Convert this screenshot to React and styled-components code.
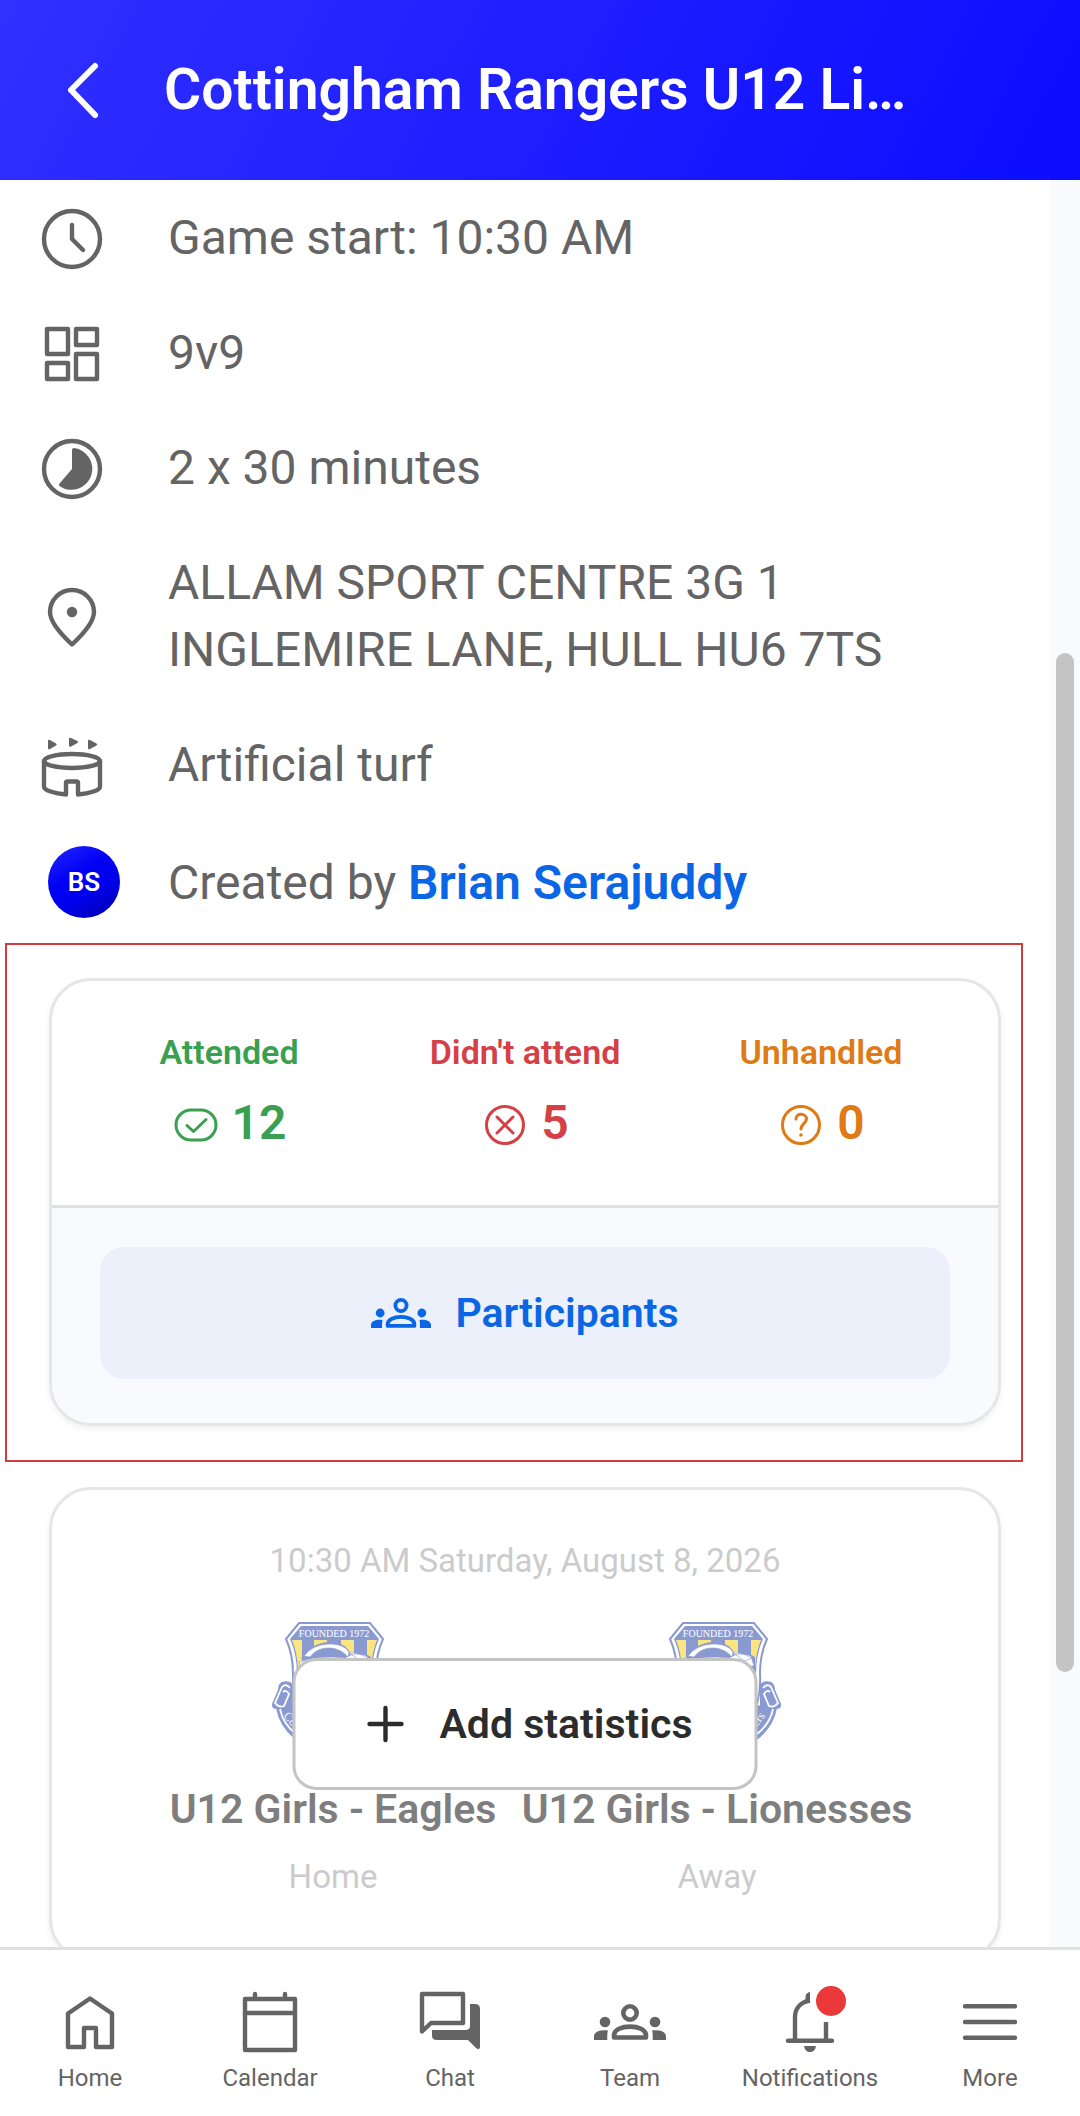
import React from "react";
import styled, { createGlobalStyle } from "styled-components";

const GlobalStyle = createGlobalStyle`
  *, *::before, *::after { box-sizing: border-box; }
  body {
    margin: 0;
    background: #fff;
    color: #646464;
    font-family: Roboto, "Liberation Sans", sans-serif;
  }
  button { font-family: inherit; cursor: pointer; }
`;

const Page = styled.div`
  display: flex;
  flex-direction: column;
  height: 100vh;
`;

const Header = styled.header`
  display: flex;
  align-items: center;
  flex: none;
  gap: 44px;
  height: 180px;
  padding: 0 160px 0 48px;
  color: #fff;
  background: linear-gradient(118deg, #3030ff 0%, #1e1eff 50%, #0c0cff 100%);
`;

const BackButton = styled.button`
  flex: none;
  width: 72px;
  height: 72px;
  padding: 0;
  border: 0;
  color: inherit;
  background: none;
`;

const Title = styled.h1`
  margin: 0;
  min-width: 0;
  overflow: hidden;
  white-space: nowrap;
  text-overflow: ellipsis;
  font-size: 57px;
  line-height: 72px;
  font-weight: 600;
`;

const Body = styled.div`
  display: flex;
  flex: 1;
  min-height: 0;
`;

const Content = styled.main`
  flex: 1;
  min-width: 0;
  overflow: hidden;
`;

const ScrollTrack = styled.div`
  display: flex;
  flex-direction: column;
  align-items: center;
  flex: none;
  width: 30px;
  background: #f8fafc;
`;

const TrackSpace = styled.div`
  flex: ${(p) => p.$share};
`;

const Thumb = styled.div`
  flex: 1019;
  width: 18px;
  border-radius: 9px;
  background: #c4c4c4;
`;

const Details = styled.ul`
  display: flex;
  flex-direction: column;
  gap: 48px;
  margin: 0;
  padding: 24px 48px 25px 36px;
  list-style: none;
`;

const DetailRow = styled.li`
  display: flex;
  align-items: center;
  font-size: 48px;
  line-height: 67px;
`;

const Media = styled.span`
  flex: none;
  width: 132px;
  height: 72px;
  margin: ${(p) => (p.$avatar ? "0" : "-2px 0 -4px")};
  padding-left: ${(p) => (p.$avatar ? "12px" : "0")};
`;

const Avatar = styled.span`
  display: flex;
  align-items: center;
  justify-content: center;
  width: 72px;
  height: 72px;
  border-radius: 50%;
  color: #fff;
  font-size: 26px;
  font-weight: 600;
  background: linear-gradient(150deg, #2626ff 0%, #0000f4 40%, #0000f0 60%, #0000a8 100%);
`;

const PersonLink = styled.a`
  color: #0a66e4;
  font-weight: 600;
  text-decoration: none;
`;

const Highlight = styled.section`
  margin: 0 27px 25px 5px;
  padding: 33px 20px 34px 42px;
  border: 2px solid #d23c3c;
`;

const Card = styled.div`
  overflow: hidden;
  border: 3px solid #e6e6e6;
  border-radius: 42px;
  background: #fff;
  box-shadow: 0 3px 6px rgba(0, 0, 0, 0.06);
`;

const Stats = styled.div`
  display: grid;
  grid-template-columns: repeat(3, 1fr);
  padding: 46px 29px 49px;
`;

const Stat = styled.div`
  display: flex;
  flex-direction: column;
  align-items: center;
  gap: 12px;
  color: ${(p) => p.$color};
`;

const StatLabel = styled.span`
  font-size: 34px;
  line-height: 50px;
  font-weight: 600;
  white-space: nowrap;
`;

const StatValue = styled.span`
  display: flex;
  align-items: center;
  gap: 12px;
  font-size: 48px;
  line-height: 67px;
  font-weight: 600;

  svg { margin-top: 4px; }
`;

const CardFooter = styled.div`
  padding: 39px 48px 44px;
  border-top: 3px solid #e0e0e0;
  background: #f9fafd;
`;

const ActionButton = styled.button`
  display: flex;
  align-items: center;
  justify-content: center;
  gap: 24px;
  height: 132px;
  border-radius: 24px;
  font-size: 41px;
  font-weight: 600;
  white-space: nowrap;
`;

const ParticipantsButton = styled(ActionButton)`
  width: 100%;
  border: 0;
  color: #0a66e4;
  background: #ebf0fb;
`;

const MatchCard = styled(Card)`
  position: relative;
  margin: 0 49px;
`;

const MatchInfo = styled.div`
  display: flex;
  flex-direction: column;
  align-items: center;
  gap: 37px;
  padding: 47px 0 57px;
  opacity: 0.6;
`;

const Caption = styled.span`
  color: #aaa;
  font-size: 33px;
  line-height: 48px;
`;

const Teams = styled.div`
  display: grid;
  grid-template-columns: repeat(2, 384px);
  justify-content: center;
`;

const Team = styled.div`
  display: flex;
  flex-direction: column;
  align-items: center;
`;

const TeamName = styled.span`
  margin: 13px -12px 14px;
  color: #2a2a2a;
  font-size: 41px;
  line-height: 60px;
  font-weight: 600;
  white-space: nowrap;
`;

const AddButton = styled(ActionButton)`
  position: absolute;
  top: 50%;
  left: 50%;
  transform: translate(-50%, -50%);
  padding: 0 62px 0 60px;
  border: 3px solid #c4c4c4;
  color: #2c2c2c;
  background: #fff;
`;

const Nav = styled.nav`
  display: grid;
  grid-template-columns: repeat(6, 1fr);
  flex: none;
  padding: 36px 0 20px;
  border-top: 3px solid #e0e0e0;
  background: #fff;
`;

const NavLink = styled.a`
  display: flex;
  flex-direction: column;
  align-items: center;
  gap: 2px;
  color: #646464;
  font-size: 24px;
  line-height: 36px;
  text-decoration: none;
`;

const NavIcon = styled.span`
  position: relative;
  width: 72px;
  height: 72px;
`;

const Badge = styled.span`
  position: absolute;
  top: 0;
  right: 0;
  width: 30px;
  height: 30px;
  border-radius: 50%;
  background: #eb3838;
`;

const Svg = styled.svg`
  display: block;
  flex: none;
  fill: none;
  stroke: currentColor;
  stroke-width: ${(p) => p.$weight || 4.4};
  stroke-linecap: round;
  stroke-linejoin: round;

  .solid { fill: currentColor; stroke: none; }
`;

const Icon = ({ size = 72, box = 72, weight, children }) => (
  <Svg width={size} height={size} viewBox={`0 0 ${box} ${box}`} $weight={weight} aria-hidden="true">
    {children}
  </Svg>
);

const ClockIcon = () => (
  <Icon><circle cx="36" cy="36" r="28" /><path d="M36 22V36L47 47" /></Icon>
);

const GridIcon = () => (
  <Icon>
    <rect x="11" y="11" width="21" height="25" /><rect x="40" y="11" width="21" height="16" />
    <rect x="11" y="45" width="21" height="16" /><rect x="40" y="36" width="21" height="25" />
  </Icon>
);

const DurationIcon = () => (
  <Icon>
    <circle cx="36" cy="36" r="28" />
    <path className="solid" d="M36 17Q36 15 38 15A21 21 0 1 1 24 53.500Q22 52 23.500 50.500L36 36Z" />
  </Icon>
);

const PinIcon = () => (
  <Icon>
    <path d="M36 63.500C29 57 14 43 14 31A22 22 0 0 1 58 31C58 43 43 57 36 63.500Z" />
    <circle className="solid" cx="36" cy="31" r="5.2" />
  </Icon>
);

const StadiumIcon = () => (
  <Icon>
    <ellipse cx="36" cy="31" rx="28" ry="7" />
    <path d="M8 31V57C8 60 18 63.500 30 64.500V53Q30 51.500 31.500 51.500H40.500Q42 51.500 42 53V64.500C54 63.500 64 60 64 57V31" />
    <path className="solid" d="M12 11Q12 9 14 10L20 13.500Q21.500 14.500 20 15.500L14 19Q12 20 12 18ZM33 9Q33 7 35 8L41.500 11Q43 12 41.500 13L35 16.500Q33 17.500 33 15.500ZM52 11Q52 9 54 10L60.500 13.500Q62 14.500 60.500 15.500L54 19Q52 20 52 18Z" />
  </Icon>
);

const PeopleIcon = ({ size }) => (
  <Icon size={size} weight={4.6}>
    <circle cx="36" cy="27" r="6.7" />
    <path d="M20 51.500V49.500C20 43.500 28 40.600 36 40.600S52 43.500 52 49.500V51.500Z" />
    <circle className="solid" cx="11" cy="36" r="5.3" /><circle className="solid" cx="61" cy="36" r="5.3" />
    <path className="solid" d="M0 54V50.500C0 46.500 5 43 14 44.500Q13 47 13.300 54ZM72 54V50.500C72 46.500 67 43 58 44.500Q59 47 58.700 54Z" />
  </Icon>
);

const HomeIcon = () => (
  <Icon><path d="M36 12.500L14 27.500V61H30V42H42V61H58V27.500Z" /></Icon>
);

const CalendarIcon = () => (
  <Icon><rect x="11" y="13" width="50" height="51" /><path d="M11 27H61M21 8V13M51 8V13" /></Icon>
);

const ChatIcon = () => (
  <Icon>
    <path d="M8 8H49V37H17L8 45.500Z" />
    <path className="solid" d="M56 18H61Q66 18 66 23V61.500Q65 64.500 62 62L54 54H23Q18 54 18 49.500V44H51Q56 44 56 40Z" />
  </Icon>
);

const BellIcon = () => (
  <Icon>
    <path d="M14 54.700H58" />
    <path strokeLinecap="butt" d="M21 54V31C21 22 27 16 36 14.500M52 54V36" />
    <path className="solid" d="M31.500 16V10.500Q32 6.500 36 6V16ZM30 60H42Q41 66 36 66T30 60Z" />
  </Icon>
);

const MenuIcon = () => (
  <Icon><path d="M11 20.300H61M11 36H61M11 51.700H61" /></Icon>
);

const CheckIcon = () => (
  <Icon size={48} box={48} weight={3}>
    <rect x="4" y="9" width="40" height="30" rx="15" /><path d="M15 24.500L21.500 30.500L34 18.500" />
  </Icon>
);

const CrossIcon = () => (
  <Icon size={48} box={48} weight={3}>
    <circle cx="24" cy="24" r="18.500" /><path d="M16 16L32 32M32 16L16 32" />
  </Icon>
);

const QuestionIcon = () => (
  <Icon size={48} box={48} weight={3}>
    <circle cx="24" cy="24" r="18.500" />
    <path d="M19 18C19 11.500 29.500 12 29.500 18C29.500 22 24 23 24 28" />
    <circle className="solid" cx="24" cy="34" r="1.8" />
  </Icon>
);

const Ribbon = () => (
  <>
    <path d="M31 63Q28 59 21 61Q18 63 18 68L12 82Q11 86 16 86Q19 103 34 116L60 126V90L31 84Z" fill="#3d58b4" stroke="#3d58b4" strokeWidth="2" />
    <path d="M29 66Q25 61 21 65L14 81Q18 86 23 84L28 72Q25 67 22 70M19 87Q22 102 35 112" fill="none" stroke="#fff" strokeWidth="1.800" />
  </>
);

const CrestText = styled.text`
  fill: #fff;
  font-family: "Liberation Serif", serif;
  font-size: ${(p) => p.$size}px;
`;

const Crest = () => (
  <svg width="144" height="144" viewBox="0 0 144 144" role="img" aria-label="Club crest">
    <Ribbon />
    <g transform="translate(147 0) scale(-1 1)"><Ribbon /></g>
    <CrestText $size={12} transform="translate(22 94) rotate(50)">Cott</CrestText>
    <CrestText $size={12} transform="translate(112 105) rotate(-52)">ers</CrestText>
    <path d="M38 1H109L122 17Q115 32 115 52Q118 100 73 142Q29 100 32 52Q32 32 25 17Z" fill="#fff" stroke="#3d58b4" strokeWidth="2" />
    <path d="M40 4H107L118 17Q111 32 111 52Q114 96 73 136Q33 96 36 52Q36 32 29 17Z" fill="#3d58b4" />
    <path d="M31 18H41V46H37Q36 30 31 18ZM53 18H66V60H53ZM80 18H93V60H80ZM106 18H116Q111 30 110 46H106Z" fill="#f8d62c" />
    <path d="M40 37Q50 20 70 20Q86 21 90 33Q100 28 110 35V50L40 48L46 35Z" fill="#3d58b4" />
    <path d="M43 34Q52 22 69 22Q83 22 88 30L87 35Q80 27 70 26Q56 25 49 35ZM38 40Q60 33 84 36Q94 29 106 34L109 44H40ZM88 31Q96 30 107 36L100 39Z" fill="#fff" stroke="#3d58b4" strokeWidth="0.600" />
    <CrestText $size={10} x="73" y="14.500" textAnchor="middle">FOUNDED 1972</CrestText>
  </svg>
);

const details = [
  { icon: ClockIcon, text: "Game start: 10:30 AM" },
  { icon: GridIcon, text: "9v9" },
  { icon: DurationIcon, text: "2 x 30 minutes" },
  { icon: PinIcon, text: <>ALLAM SPORT CENTRE 3G 1<br />INGLEMIRE LANE, HULL HU6 7TS</> },
  { icon: StadiumIcon, text: "Artificial turf" },
];

const stats = [
  { label: "Attended", value: 12, color: "#3b9f50", icon: CheckIcon },
  { label: "Didn't attend", value: 5, color: "#d44045", icon: CrossIcon },
  { label: "Unhandled", value: 0, color: "#e07a14", icon: QuestionIcon },
];

const teams = [
  { name: "U12 Girls - Eagles", side: "Home" },
  { name: "U12 Girls - Lionesses", side: "Away" },
];

const links = [
  { label: "Home", icon: HomeIcon },
  { label: "Calendar", icon: CalendarIcon },
  { label: "Chat", icon: ChatIcon },
  { label: "Team", icon: PeopleIcon },
  { label: "Notifications", icon: BellIcon, unread: true },
  { label: "More", icon: MenuIcon },
];

export default function App() {
  return (
    <Page>
      <GlobalStyle />
      <Header>
        <BackButton type="button" aria-label="Back">
          <Icon weight={6}><path d="M47 12L23 36L47 61" /></Icon>
        </BackButton>
        <Title>Cottingham Rangers U12 Li…</Title>
      </Header>
      <Body>
        <Content>
          <Details>
            {details.map(({ icon: Glyph, text }, i) => (
              <DetailRow key={i}>
                <Media><Glyph /></Media>
                <span>{text}</span>
              </DetailRow>
            ))}
            <DetailRow>
              <Media $avatar><Avatar>BS</Avatar></Media>
              <span>Created by <PersonLink href="#profile">Brian Serajuddy</PersonLink></span>
            </DetailRow>
          </Details>
          <Highlight>
            <Card>
              <Stats>
                {stats.map(({ label, value, color, icon: Glyph }) => (
                  <Stat key={label} $color={color}>
                    <StatLabel>{label}</StatLabel>
                    <StatValue><Glyph />{value}</StatValue>
                  </Stat>
                ))}
              </Stats>
              <CardFooter>
                <ParticipantsButton type="button"><PeopleIcon size={60} />Participants</ParticipantsButton>
              </CardFooter>
            </Card>
          </Highlight>
          <MatchCard>
            <MatchInfo>
              <Caption>10:30 AM Saturday, August 8, 2026</Caption>
              <Teams>
                {teams.map(({ name, side }) => (
                  <Team key={side}>
                    <Crest />
                    <TeamName>{name}</TeamName>
                    <Caption>{side}</Caption>
                  </Team>
                ))}
              </Teams>
            </MatchInfo>
            <AddButton type="button">
              <Icon size={60} box={60}><path d="M30 14V46M14 30H46" /></Icon>
              Add statistics
            </AddButton>
          </MatchCard>
        </Content>
        <ScrollTrack aria-hidden="true">
          <TrackSpace $share={473} />
          <Thumb />
          <TrackSpace $share={275} />
        </ScrollTrack>
      </Body>
      <Nav>
        {links.map(({ label, icon: Glyph, unread }) => (
          <NavLink key={label} href={`#${label.toLowerCase()}`}>
            <NavIcon><Glyph />{unread && <Badge />}</NavIcon>
            {label}
          </NavLink>
        ))}
      </Nav>
    </Page>
  );
}
